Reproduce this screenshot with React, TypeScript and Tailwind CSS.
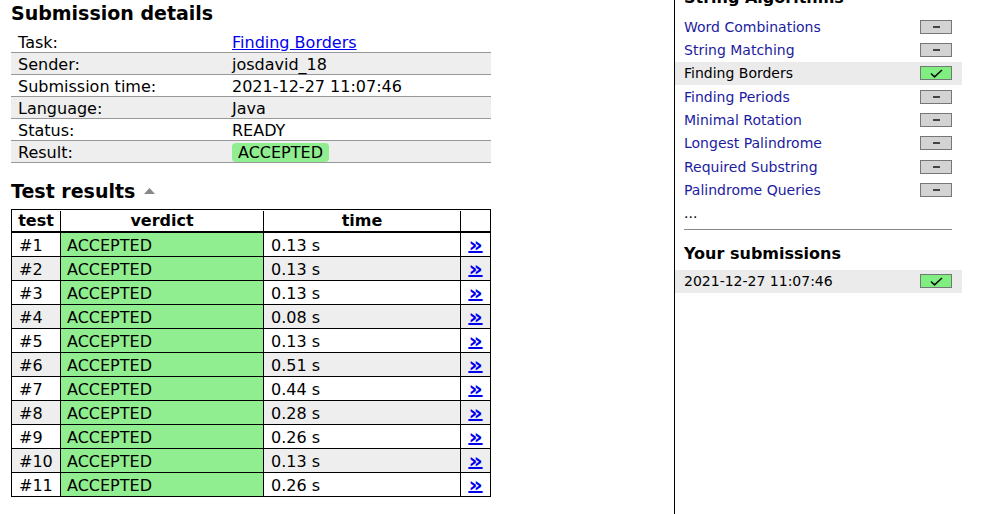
import { Fragment } from 'react';

const details: [string, string][] = [
  ['Task:', 'Finding Borders'],
  ['Sender:', 'josdavid_18'],
  ['Submission time:', '2021-12-27 11:07:46'],
  ['Language:', 'Java'],
  ['Status:', 'READY'],
  ['Result:', 'ACCEPTED'],
];

const times = ['0.13', '0.13', '0.13', '0.08', '0.13', '0.51', '0.44', '0.28', '0.26', '0.13', '0.26'];

const tasks = [
  'Word Combinations',
  'String Matching',
  'Finding Borders',
  'Finding Periods',
  'Minimal Rotation',
  'Longest Palindrome',
  'Required Substring',
  'Palindrome Queries',
];

function StatusBox({ done }: { done?: boolean }) {
  return (
    <div
      className={
        'flex h-[14px] w-[32px] items-center justify-center border border-[#777] ' +
        (done ? 'bg-[#80ee80]' : 'bg-[#d3d3d3]')
      }
    >
      {done ? (
        <svg width="13" height="9" viewBox="0 0 13 9">
          <polyline points="1,4.5 4.5,7.8 12,1" fill="none" stroke="#111" strokeWidth="1.6" />
        </svg>
      ) : (
        <div className="h-[2px] w-[7px] bg-[#444]" />
      )}
    </div>
  );
}

export default function App() {
  return (
    <div className="flex h-[514px] w-[1006px] overflow-hidden bg-white font-['DejaVu_Sans',sans-serif] text-black">
      <div className="w-[674px] shrink-0 pl-[11px]">
        <h1 className="h-[24px] pt-[1px] text-[19px] font-bold leading-[24px]">Submission details</h1>
        <div className="mt-[7px] w-[480px] text-[16px]">
          {details.map(([label, value], i) => (
            <div
              key={label}
              className={
                'flex h-[22px] items-center border-b border-[#999] pt-[1px] leading-[21px] ' +
                (i % 2 === 1 ? 'bg-[#eeeeee]' : 'bg-white')
              }
            >
              <div className="w-[221px] pl-[7px]">{label}</div>
              <div>
                {label === 'Task:' ? (
                  <a href="#" className="text-[#0000ee] underline">
                    {value}
                  </a>
                ) : label === 'Result:' ? (
                  <span className="inline-block h-[19px] rounded-[4px] bg-[#90ee90] px-[6px] leading-[19px]">
                    {value}
                  </span>
                ) : (
                  value
                )}
              </div>
            </div>
          ))}
        </div>

        <div className="mt-[15px] flex h-[24px] items-center">
          <h2 className="pt-[1px] text-[19px] font-bold leading-[24px]">Test results</h2>
          <svg className="ml-[9px] mt-[1px]" width="11" height="6" viewBox="0 0 11 6">
            <polygon points="0,6 5.5,0 11,6" fill="#888" />
          </svg>
        </div>

        <div className="mt-[7px] w-[480px] border border-black text-[16px]">
          <div className="flex h-[23px] border-b-2 border-black pt-[1px] font-bold leading-[20px]">
            <div className="w-[49px] border-r border-black text-center">test</div>
            <div className="w-[203px] border-r border-black text-center">verdict</div>
            <div className="w-[197px] border-r border-black text-center">time</div>
            <div className="flex-1" />
          </div>
          {times.map((t, i) => (
            <div
              key={i}
              className={
                'flex leading-[23px] ' +
                (i < times.length - 1 ? 'h-[24px] border-b border-black ' : 'h-[23px] ') +
                (i % 2 === 1 ? 'bg-[#eeeeee]' : 'bg-white')
              }
            >
              <div className="w-[49px] border-r border-black pl-[7px] pt-[1px]">#{i + 1}</div>
              <div className="w-[203px] border-r border-black bg-[#90ee90] pl-[6px] pt-[1px]">ACCEPTED</div>
              <div className="w-[197px] border-r border-black pl-[7px] pt-[1px]">{t} s</div>
              <div className="flex h-[23px] flex-1 items-center justify-center">
                <a
                  href="#"
                  className="text-[22px] font-bold leading-[18px] text-[#0000ee] underline decoration-2 underline-offset-[-1px]"
                >
                  »
                </a>
              </div>
            </div>
          ))}
        </div>
      </div>

      <div className="w-[288px] shrink-0 border-l border-black text-[14px]">
        <h2 className="-mt-[14px] h-[24px] pl-[9px] text-[16px] font-bold leading-[24px]">String Algorithms</h2>
        <div className="mt-[5px]">
          {tasks.map((name) => (
            <Fragment key={name}>
              <div
                className={
                  'flex h-[23.33px] items-center justify-between pl-[9px] pr-[10px] ' +
                  (name === 'Finding Borders' ? 'bg-[#ebebeb]' : '')
                }
              >
                <a
                  href="#"
                  className={'pt-[1px] ' + (name === 'Finding Borders' ? 'text-black' : 'text-[#1c1ca0]')}
                >
                  {name}
                </a>
                <StatusBox done={name === 'Finding Borders'} />
              </div>
            </Fragment>
          ))}
          <div className="flex h-[23px] items-center pl-[9px] pt-[1px]">...</div>
        </div>
        <div className="ml-[9px] mr-[10px] mt-[4px] border-t border-[#888]" />
        <h2 className="mt-[11px] h-[24px] pl-[9px] pt-[1px] text-[16px] font-bold leading-[24px]">
          Your submissions
        </h2>
        <div className="mt-[5px] flex h-[23px] items-center justify-between bg-[#ebebeb] pl-[9px] pr-[10px]">
          <span className="pt-[1px]">2021-12-27 11:07:46</span>
          <StatusBox done />
        </div>
      </div>
    </div>
  );
}
